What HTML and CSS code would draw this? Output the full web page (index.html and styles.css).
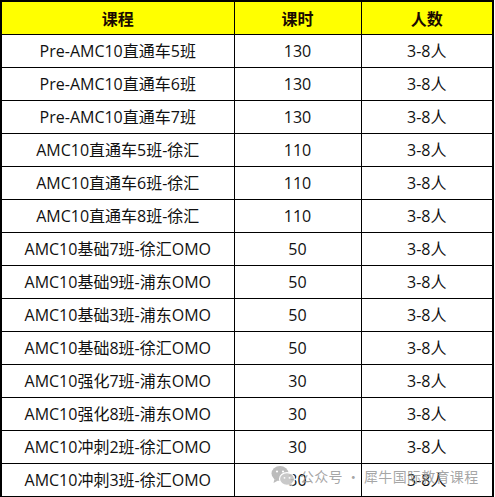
FILE: index.html
```html
<!DOCTYPE html>
<html lang="zh-CN">

<head>
    <meta charset="UTF-8">
    <meta name="viewport" content="width=device-width, initial-scale=1.0">
    <title>课程表</title>
    <link rel="stylesheet" href="styles.css">
</head>

<body>
    <div class="sheet">
        <table class="course-table">
            <colgroup>
                <col class="col-name">
                <col class="col-hours">
                <col class="col-size">
            </colgroup>
            <thead>
                <tr>
                    <th>课程</th>
                    <th>课时</th>
                    <th>人数</th>
                </tr>
            </thead>
            <tbody>
                <tr><td>Pre-AMC10直通车5班</td><td>130</td><td>3-8人</td></tr>
                <tr><td>Pre-AMC10直通车6班</td><td>130</td><td>3-8人</td></tr>
                <tr><td>Pre-AMC10直通车7班</td><td>130</td><td>3-8人</td></tr>
                <tr><td>AMC10直通车5班-徐汇</td><td>110</td><td>3-8人</td></tr>
                <tr><td>AMC10直通车6班-徐汇</td><td>110</td><td>3-8人</td></tr>
                <tr><td>AMC10直通车8班-徐汇</td><td>110</td><td>3-8人</td></tr>
                <tr><td>AMC10基础7班-徐汇OMO</td><td>50</td><td>3-8人</td></tr>
                <tr><td>AMC10基础9班-浦东OMO</td><td>50</td><td>3-8人</td></tr>
                <tr><td>AMC10基础3班-浦东OMO</td><td>50</td><td>3-8人</td></tr>
                <tr><td>AMC10基础8班-徐汇OMO</td><td>50</td><td>3-8人</td></tr>
                <tr><td>AMC10强化7班-浦东OMO</td><td>30</td><td>3-8人</td></tr>
                <tr><td>AMC10强化8班-浦东OMO</td><td>30</td><td>3-8人</td></tr>
                <tr><td>AMC10冲刺2班-徐汇OMO</td><td>30</td><td>3-8人</td></tr>
                <tr><td>AMC10冲刺3班-徐汇OMO</td><td>30</td><td>3-8人</td></tr>
            </tbody>
        </table>

        <!-- 公众号水印 -->
        <div class="watermark">
            <svg class="wm-icon" width="24" height="22" viewBox="0 0 24 22">
                <ellipse cx="9" cy="8.5" rx="8.5" ry="7.5" fill="#b5b5b5"/>
                <path d="M3.5 14 L2.5 18 L7 15.5 Z" fill="#b5b5b5"/>
                <ellipse cx="16" cy="14" rx="7.5" ry="6.3" fill="#c4c4c4" stroke="#fff" stroke-width="1.2"/>
                <path d="M20.5 18.5 L22 21.5 L17.5 19.8 Z" fill="#c4c4c4"/>
                <circle cx="6" cy="6.5" r="1.1" fill="#fff"/>
                <circle cx="12" cy="6.5" r="1.1" fill="#fff"/>
                <circle cx="13.5" cy="12.8" r="0.9" fill="#fff"/>
                <circle cx="18.5" cy="12.8" r="0.9" fill="#fff"/>
            </svg>
            <span>公众号 · 犀牛国际教育课程</span>
        </div>
    </div>
</body>

</html>
```

FILE: styles.css
```css
body {
    margin: 0;
    background-color: #ffffff;
}

.sheet {
    position: relative;
    width: 495px;
    height: 497px;
}

.course-table {
    width: 494px;
    border-collapse: collapse;
    table-layout: fixed;
    border: 2px solid #000000;
    font-family: "Open Sans", "Noto Sans CJK SC", sans-serif;
    font-size: 16px;
    color: #111111;
}

.col-name {
    width: 233px;
}

.col-hours {
    width: 127px;
}

.course-table th,
.course-table td {
    border: 1px solid #000000;
    height: 32px;
    padding: 0;
    text-align: center;
    vertical-align: middle;
    line-height: 20px;
}

.course-table th {
    background-color: #ffff00;
    font-family: "Noto Sans CJK SC", sans-serif;
    font-weight: bold;
    font-size: 16px;
    color: #1a0a00;
}

.watermark {
    position: absolute;
    left: 271px;
    top: 465px;
    display: flex;
    align-items: center;
    gap: 5px;
    font-family: "Noto Sans CJK SC", sans-serif;
    font-size: 14px;
    color: rgba(150, 150, 150, 0.85);
    letter-spacing: 0.3px;
}

.wm-icon {
    opacity: 0.9;
}
```
